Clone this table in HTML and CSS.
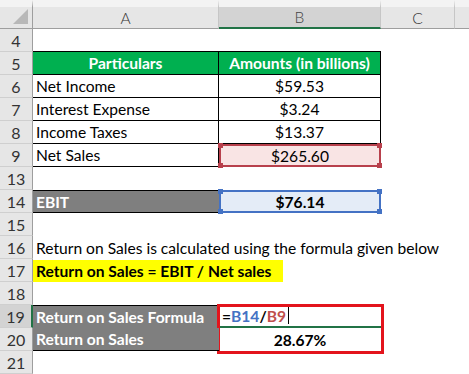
FILE: index.html
```html
<!DOCTYPE html>
<html>
<head>
<meta charset="utf-8">
<link rel="stylesheet" href="styles.css">
</head>
<body>
<div class="sheet">
  <div class="ch corner"><span class="tri"></span></div>
  <div class="ch">A</div>
  <div class="ch sel">B</div>
  <div class="ch">C</div>
  <div class="ch last"></div>

  <div class="rh">4</div><div class="c bb"></div><div class="c bb"></div><div class="c"></div><div class="c"></div>

  <div class="rh">5</div><div class="c green br bb">Particulars</div><div class="c green br bb">Amounts (in billions)</div><div class="c"></div><div class="c"></div>

  <div class="rh">6</div><div class="c br bb">Net Income</div><div class="c br bb ctr">$59.53</div><div class="c"></div><div class="c"></div>

  <div class="rh">7</div><div class="c br bb">Interest Expense</div><div class="c br bb ctr">$3.24</div><div class="c"></div><div class="c"></div>

  <div class="rh">8</div><div class="c br bb">Income Taxes</div><div class="c br bb ctr">$13.37</div><div class="c"></div><div class="c"></div>

  <div class="rh">9</div><div class="c br bb">Net Sales</div>
  <div class="c ref red ctr">$265.60<i class="k tl"></i><i class="k bl"></i><i class="k tr"></i><i class="k br2"></i></div>
  <div class="c"></div><div class="c"></div>

  <div class="rh">13</div><div class="c"></div><div class="c"></div><div class="c"></div><div class="c"></div>

  <div class="rh">14</div><div class="c gray bt bb">EBIT</div>
  <div class="c ref blue ctr b">$76.14<i class="k tl"></i><i class="k bl"></i><i class="k tr"></i><i class="k br2"></i></div>
  <div class="c"></div><div class="c"></div>

  <div class="rh">15</div><div class="c"></div><div class="c"></div><div class="c"></div><div class="c"></div>

  <div class="rh">16</div><div class="c span">Return on Sales is calculated using the formula given below</div>

  <div class="rh">17</div><div class="c span"><span class="yellow">Return on Sales = EBIT / Net sales</span></div>

  <div class="rh">18</div><div class="c"></div><div class="c"></div><div class="c"></div><div class="c"></div>

  <div class="rh selr">19</div><div class="c gray bt">Return on Sales Formula</div>
  <div class="c active"><span class="f">=<span class="fb">B14</span>/<span class="fr">B9</span></span><span class="caret"></span><span class="redbox"></span></div>
  <div class="c"></div><div class="c"></div>

  <div class="rh">20</div><div class="c gray bb">Return on Sales</div><div class="c ctr b">28.67%</div><div class="c"></div><div class="c"></div>

  <div class="rh">21</div><div class="c"></div><div class="c"></div><div class="c"></div><div class="c"></div>
</div>
</body>
</html>
```

FILE: styles.css
```css
html, body {
  margin: 0;
  padding: 0;
  background: #fff;
}
.sheet {
  display: grid;
  grid-template-columns: 33px 186px 162px 74px 1fr;
  grid-template-rows: 29px;
  grid-auto-rows: 23px;
  width: 469px;
  height: 374px;
  overflow: hidden;
  font-family: Lato, "Liberation Sans", sans-serif;
  font-size: 15.6px;
  color: #000;
}
.ch {
  box-sizing: border-box;
  background: #e6e6e6;
  border-top: 7px solid #f3f3f3;
  border-right: 1px solid #c6c6c6;
  border-bottom: 1px solid #9e9e9e;
  display: flex;
  align-items: center;
  justify-content: center;
  color: #333;
  font-size: 15.5px;
  font-weight: 300;
}
.ch.last { border-right: none; }
.ch.sel {
  background: #d3d3d3;
  border-bottom: 2px solid #217346;
  color: #444;
}
.corner {
  position: relative;
  border-right: 1px solid #9e9e9e;
}
.tri {
  position: absolute;
  right: 4px;
  bottom: 4px;
  width: 0;
  height: 0;
  border-left: 15px solid transparent;
  border-bottom: 15px solid #b8b8b8;
}
.rh {
  box-sizing: border-box;
  background: #e6e6e6;
  border-right: 1px solid #9e9e9e;
  border-bottom: 1px solid #cfcfcf;
  display: flex;
  align-items: center;
  justify-content: center;
  color: #333;
  font-size: 16px;
}
.rh.selr {
  background: #d3d3d3;
  border-right: 2px solid #217346;
}
.c {
  box-sizing: border-box;
  display: flex;
  align-items: center;
  padding: 0 3px;
  white-space: nowrap;
  position: relative;
}
.ctr { justify-content: center; }
.b { font-weight: 700; }
.br { border-right: 1px solid #000; }
.bb { border-bottom: 1px solid #000; }
.bt { border-top: 1px solid #000; }
.green {
  background: #00b050;
  color: #fff;
  font-weight: 700;
  justify-content: center;
}
.gray {
  background: #7f7f7f;
  color: #fff;
  font-weight: 700;
}
.c.span {
  grid-column: 2 / 6;
  padding: 0;
  text-indent: 3px;
}
.yellow {
  background: #ffff00;
  font-weight: 700;
  width: 250px;
  height: 22px;
  display: flex;
  align-items: center;
  margin-top: 1px;
}
.ref { border-width: 2px; border-style: solid; }
.red {
  background: #f9e4e4;
  border-color: #b8404c;
}
.blue {
  background: #e4ecf7;
  border-color: #4472c4;
}
.k {
  position: absolute;
  width: 5px;
  height: 5px;
}
.red .k { background: #b8404c; }
.blue .k { background: #4472c4; }
.k.tl { left: -3px; top: -3px; }
.k.bl { left: -3px; bottom: -3px; }
.k.tr { right: -3px; top: -3px; }
.k.br2 { right: -3px; bottom: -3px; }
.active {
  border-bottom: 2px solid #217346;
  font-weight: 700;
}
.fb { color: #4472c4; }
.fr { color: #c0504d; }
.caret {
  width: 1px;
  height: 17px;
  background: #000;
  margin-left: 2px;
}
.redbox {
  position: absolute;
  left: -2px;
  top: -1px;
  width: 167px;
  height: 50px;
  box-sizing: border-box;
  border: 3px solid #e3141c;
}
```
